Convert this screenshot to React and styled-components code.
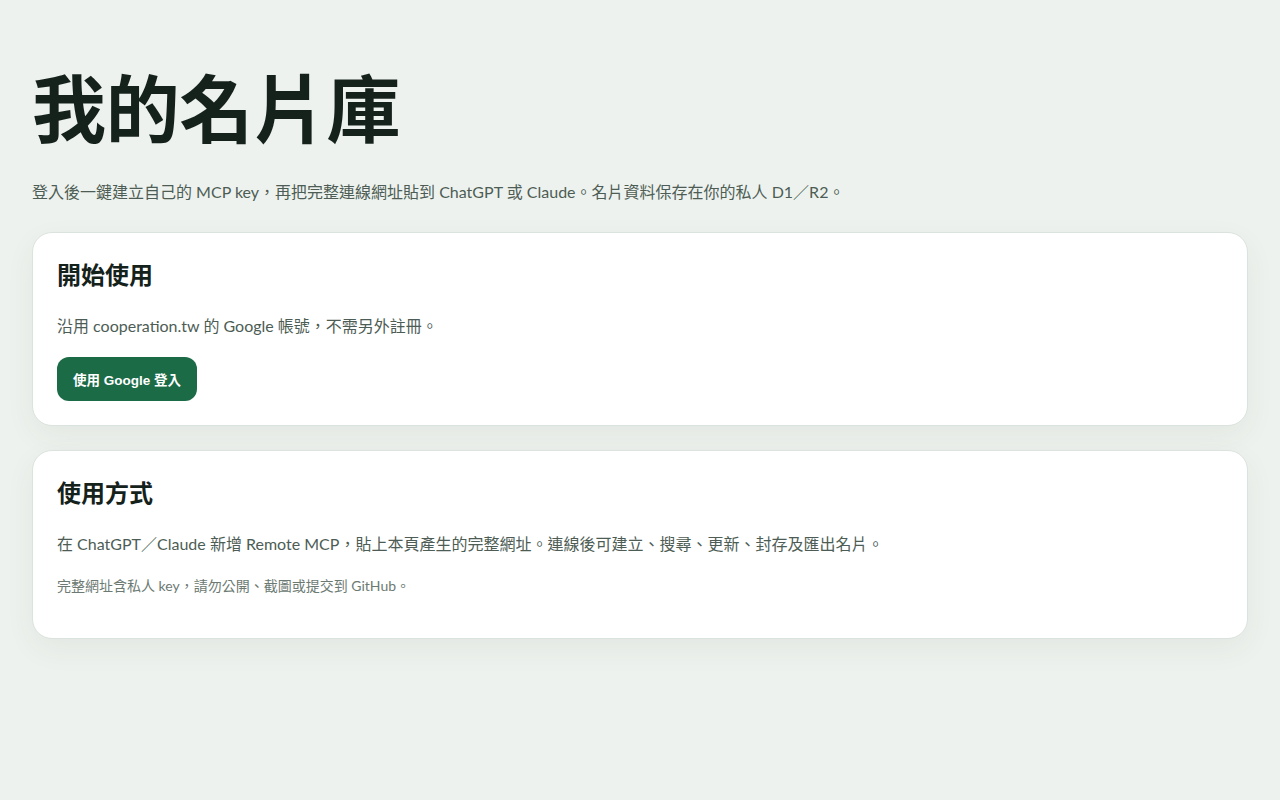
import React from 'react'
import styled, { createGlobalStyle } from 'styled-components'

const GlobalStyle = createGlobalStyle`
  html, body {
    margin: 0;
    padding: 0;
    background: #eef2ee;
  }
  body {
    font-family: Lato, "Noto Sans CJK TC", sans-serif;
    color: #15221c;
  }
`

const Page = styled.main`
  padding: 48px 32px 64px;
  display: flex;
  flex-direction: column;
`

const Title = styled.h1`
  margin: 16px 0 0;
  font-size: 74px;
  line-height: 1.1;
  font-weight: 700;
  letter-spacing: -0.005em;
  color: #15221c;
  font-family: "Noto Sans CJK TC", sans-serif;
`

const Lead = styled.p`
  margin: 34px 0 27px;
  font-size: 16px;
  line-height: 1.6;
  color: #4d5d55;
`

const Stack = styled.div`
  display: flex;
  flex-direction: column;
  gap: 24px;
`

const Card = styled.section`
  display: flex;
  flex-direction: column;
  background: #fff;
  border: 1px solid #dbe3de;
  border-radius: 20px;
  padding: 24px;
  box-shadow: 0 10px 30px rgba(30, 60, 45, 0.06);
`

const CardTitle = styled.h2`
  margin: 0;
  font-size: 24px;
  line-height: 1.4;
  font-weight: 700;
  color: #15221c;
  font-family: "Noto Sans CJK TC", sans-serif;
`

const Text = styled.p`
  margin: ${props => (props.small ? '19px 0 16px' : '22px 0 0')};
  font-size: ${props => (props.small ? '14px' : '16px')};
  line-height: 1.6;
  color: ${props => (props.small ? '#6c7a73' : '#4d5d55')};
`

const Button = styled.button`
  margin-top: 19px;
  height: 44px;
  padding: 0 16px;
  border: 0;
  border-radius: 12px;
  background: #1b6b47;
  color: #fff;
  font-family: "Liberation Sans", "Noto Sans CJK TC", sans-serif;
  font-size: 13.5px;
  font-weight: 700;
  cursor: pointer;
  align-self: flex-start;
`

const App = () => (
  <>
    <GlobalStyle />
    <Page>
      <Title>我的名片庫</Title>
      <Lead>
        登入後一鍵建立自己的 MCP key，再把完整連線網址貼到 ChatGPT 或 Claude。名片資料保存在你的私人 D1／R2。
      </Lead>
      <Stack>
        <Card>
          <CardTitle>開始使用</CardTitle>
          <Text>沿用 cooperation.tw 的 Google 帳號，不需另外註冊。</Text>
          <Button>使用 Google 登入</Button>
        </Card>
        <Card>
          <CardTitle>使用方式</CardTitle>
          <Text>
            在 ChatGPT／Claude 新增 Remote MCP，貼上本頁產生的完整網址。連線後可建立、搜尋、更新、封存及匯出名片。
          </Text>
          <Text small>完整網址含私人 key，請勿公開、截圖或提交到 GitHub。</Text>
        </Card>
      </Stack>
    </Page>
  </>
)

export default App
